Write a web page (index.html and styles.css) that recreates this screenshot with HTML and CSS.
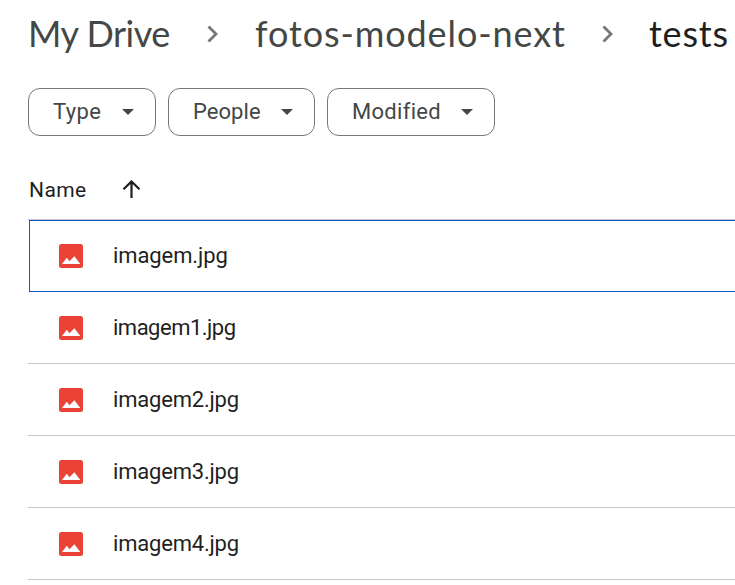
FILE: index.html
```html
<!DOCTYPE html>
<html lang="en">
<head>
<meta charset="utf-8">
<title>tests - Drive</title>
<link rel="stylesheet" href="styles.css">
</head>
<body>
<svg class="defs" aria-hidden="true">
  <symbol id="image" viewBox="0 0 24 24"><rect width="24" height="24" rx="2.5" fill="#ea4335"/><path d="M3 20 7.8 13.8 10.5 17.2 15.4 12.2 21.3 20Z" fill="#fff"/></symbol>
  <symbol id="chevron" viewBox="0 0 12 18"><path d="M1.5 1.5 9 9 1.5 16.5" fill="none" stroke="#747775" stroke-width="2.8"/></symbol>
  <symbol id="caret" viewBox="0 0 12 6"><path d="M0 0H12L6 6Z" fill="#444746"/></symbol>
</svg>
<nav class="crumbs">
  <span class="crumb drive">My Drive</span>
  <svg class="chevron"><use href="#chevron"/></svg>
  <span class="crumb folder">fotos-modelo-next</span>
  <svg class="chevron"><use href="#chevron"/></svg>
  <span class="crumb current">tests</span>
</nav>
<div class="filters">
  <button class="chip type"><span>Type</span><svg class="caret"><use href="#caret"/></svg></button>
  <button class="chip people"><span>People</span><svg class="caret"><use href="#caret"/></svg></button>
  <button class="chip modified"><span>Modified</span><svg class="caret"><use href="#caret"/></svg></button>
</div>
<main class="list">
  <div class="head"><span class="name">Name</span><svg class="arrow" viewBox="0 0 18 18"><path d="M9 18V1.8M1 9.3 9 1.5 17 9.3" fill="none" stroke="#1f1f1f" stroke-width="2.2"/></svg></div>
  <div class="row selected"><svg class="icon"><use href="#image"/></svg><span class="f0">imagem.jpg</span></div>
  <div class="row"><svg class="icon"><use href="#image"/></svg><span class="f1">imagem1.jpg</span></div>
  <div class="row"><svg class="icon"><use href="#image"/></svg><span>imagem2.jpg</span></div>
  <div class="row"><svg class="icon"><use href="#image"/></svg><span>imagem3.jpg</span></div>
  <div class="row"><svg class="icon"><use href="#image"/></svg><span>imagem4.jpg</span></div>
</main>
</body>
</html>
```
FILE: styles.css
```css
* { box-sizing: border-box; }
body { margin: 0; height: 585px; overflow: hidden; background: #fff; color: #1f1f1f; font-family: Roboto, "Liberation Sans", sans-serif; }
svg { display: block; flex: none; }
.defs { display: none; }
.crumbs { display: flex; align-items: center; height: 68px; padding-left: 28px; }
.crumb { flex: none; padding-bottom: 2px; font: 400 36px/44px Lato, sans-serif; color: #444746; white-space: nowrap; }
.drive { width: 179px; letter-spacing: -0.5px; }
.folder { width: 347px; margin-left: 36px; letter-spacing: 0.9px; }
.current { margin-left: 35px; color: #1f1f1f; letter-spacing: 0.8px; }
.chevron { width: 12px; height: 18px; }
.filters { display: flex; gap: 12px; margin-top: 20px; padding-left: 28px; }
.chip { display: flex; flex: none; align-items: center; justify-content: space-between; height: 48px; padding: 0 21px 0 24px; border: 1px solid #747775; border-radius: 12px; background: #fff; color: #444746; font: 400 22px/30px Roboto, sans-serif; }
.type { width: 128px; letter-spacing: 0.4px; }
.people { width: 147px; letter-spacing: 0.05px; }
.modified { width: 168px; letter-spacing: 0.3px; }
.caret { width: 12px; height: 6px; }
.list { padding-left: 28px; }
.head { display: flex; align-items: center; height: 84px; padding-top: 23px; border-bottom: 1px solid #c7c7c7; font-size: 21px; }
.name { width: 94px; padding: 1px 0 0 1px; letter-spacing: 0.4px; }
.arrow { width: 19px; height: 18px; }
.row { display: flex; align-items: center; height: 72px; padding-left: 31px; border-bottom: 1px solid #c7c7c7; font-size: 22px; letter-spacing: -0.2px; }
.row span { margin-left: 30px; }
.row .f0 { padding-bottom: 1px; letter-spacing: -0.1px; }
.row .f1 { letter-spacing: -0.5px; }
.selected { margin-left: 1px; padding-left: 29px; border: 1px solid #0b57d0; border-right: 0; }
.icon { width: 24px; height: 24px; }
```
